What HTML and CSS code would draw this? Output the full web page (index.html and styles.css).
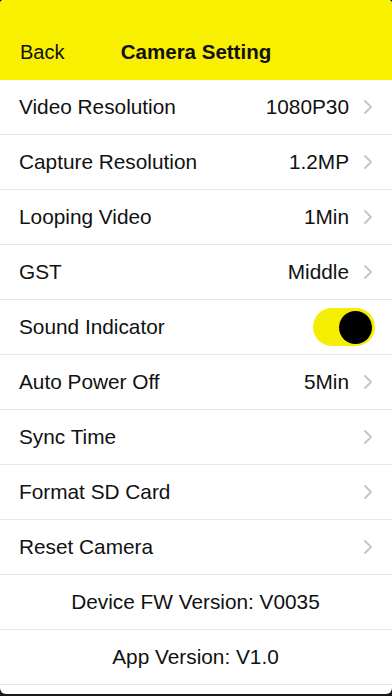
FILE: index.html
```html
<!DOCTYPE html>
<html lang="en">
<head>
    <meta charset="UTF-8">
    <meta name="viewport" content="width=device-width, initial-scale=1.0">
    <title>Camera Setting</title>
    <link rel="stylesheet" href="styles.css">
</head>
<body>
    <div class="screen">
        <header class="nav">
            <a class="nav-back" href="#">Back</a>
            <h1 class="nav-title">Camera Setting</h1>
            <span></span>
        </header>

        <ul class="settings">
            <li class="row">
                <span class="row-label">Video Resolution</span>
                <span class="row-value">1080P30</span>
                <svg class="chevron" viewBox="0 0 8 14"><polyline points="1,1 7,7 1,13"/></svg>
            </li>
            <li class="row">
                <span class="row-label">Capture Resolution</span>
                <span class="row-value">1.2MP</span>
                <svg class="chevron" viewBox="0 0 8 14"><polyline points="1,1 7,7 1,13"/></svg>
            </li>
            <li class="row">
                <span class="row-label">Looping Video</span>
                <span class="row-value">1Min</span>
                <svg class="chevron" viewBox="0 0 8 14"><polyline points="1,1 7,7 1,13"/></svg>
            </li>
            <li class="row">
                <span class="row-label">GST</span>
                <span class="row-value">Middle</span>
                <svg class="chevron" viewBox="0 0 8 14"><polyline points="1,1 7,7 1,13"/></svg>
            </li>
            <li class="row">
                <span class="row-label">Sound Indicator</span>
                <span class="switch on"><span class="knob"></span></span>
            </li>
            <li class="row">
                <span class="row-label">Auto Power Off</span>
                <span class="row-value">5Min</span>
                <svg class="chevron" viewBox="0 0 8 14"><polyline points="1,1 7,7 1,13"/></svg>
            </li>
            <li class="row">
                <span class="row-label">Sync Time</span>
                <svg class="chevron" viewBox="0 0 8 14"><polyline points="1,1 7,7 1,13"/></svg>
            </li>
            <li class="row">
                <span class="row-label">Format SD Card</span>
                <svg class="chevron" viewBox="0 0 8 14"><polyline points="1,1 7,7 1,13"/></svg>
            </li>
            <li class="row">
                <span class="row-label">Reset Camera</span>
                <svg class="chevron" viewBox="0 0 8 14"><polyline points="1,1 7,7 1,13"/></svg>
            </li>
            <li class="row row-info">Device FW Version: V0035</li>
            <li class="row row-info">App Version: V1.0</li>
        </ul>
    </div>
</body>
</html>
```

FILE: styles.css
```css
html, body {
    margin: 0;
    padding: 0;
}
body {
    font-family: "Liberation Sans", Arial, sans-serif;
    color: #111;
    background: #1a1a1a;
}
.screen {
    width: 392px;
    height: 694px;
    background: #fff;
    overflow: hidden;
    border-radius: 4px 4px 6px 6px;
}

/* 顶部导航 */
.nav {
    height: 80px;
    background: #f8f000;
    display: grid;
    grid-template-columns: 1fr auto 1fr;
    align-items: end;
    padding: 0 20px 16px;
    box-sizing: border-box;
}
.nav-back {
    color: #111;
    text-decoration: none;
    font-size: 20px;
}
.nav-title {
    margin: 0;
    font-size: 20.5px;
    font-weight: bold;
}

/* 设置列表 */
.settings {
    list-style: none;
    margin: 0;
    padding: 0;
}
.row {
    height: 55px;
    box-sizing: border-box;
    border-bottom: 1.5px solid #e6e6e6;
    display: flex;
    align-items: center;
    padding: 0 20px 0 19px;
    font-size: 20.8px;
}
.row-label {
    flex: 1;
}
.row-value {
    margin-right: 15px;
}
.chevron {
    width: 8px;
    height: 14px;
    fill: none;
    stroke: #c4c4c8;
    stroke-width: 1.8;
    stroke-linecap: round;
    stroke-linejoin: round;
}
.row-info {
    justify-content: center;
}

/* 开关 */
.switch {
    width: 62px;
    height: 38px;
    border-radius: 19px;
    background: #e6e6e6;
    display: flex;
    align-items: center;
    padding: 0 3px;
    box-sizing: border-box;
    margin-right: -3px;
}
.switch.on {
    background: #f5ee00;
    justify-content: flex-end;
}
.knob {
    width: 33px;
    height: 33px;
    border-radius: 50%;
    background: #000;
}
```
